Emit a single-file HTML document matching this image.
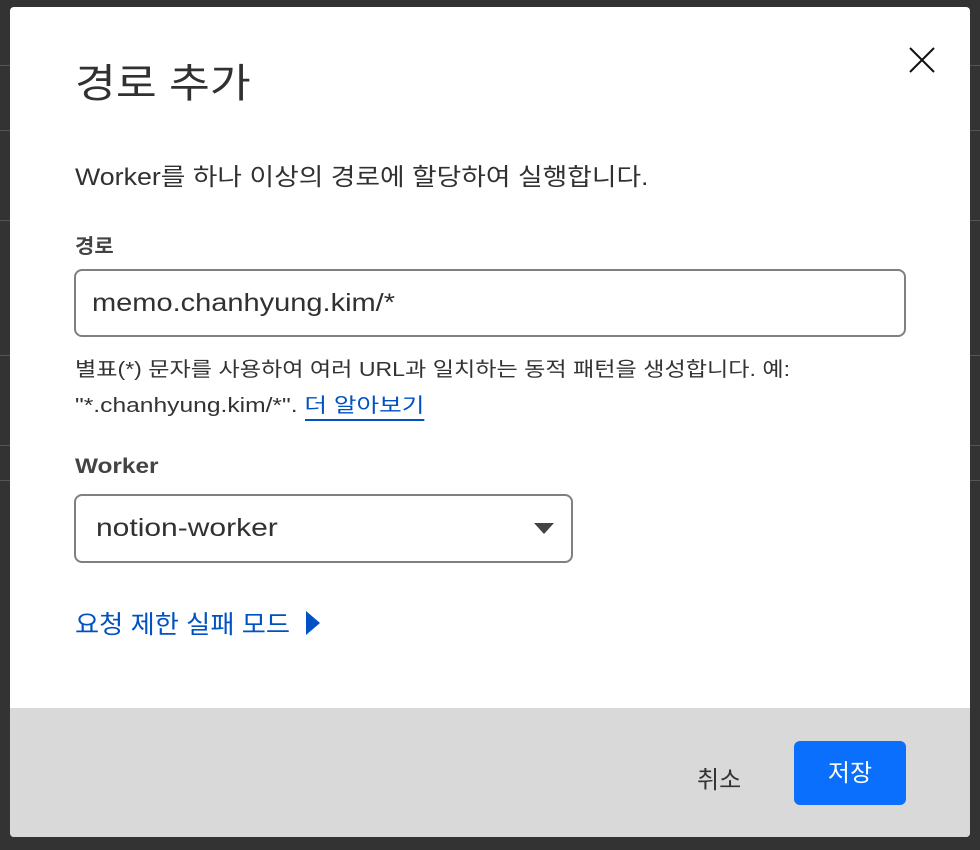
<!DOCTYPE html>
<html><head><meta charset="utf-8"><style>
*{margin:0;padding:0;box-sizing:border-box}
body{width:980px;height:850px;background:#333;position:relative;overflow:hidden;font-family:"Liberation Sans","Noto Sans CJK KR",sans-serif;color:#313131}
.bgl{position:absolute;left:0;width:980px;height:1px;background:#555}
.modal{position:absolute;left:10px;top:7px;width:960px;height:830px;background:#fff;border-radius:4px;overflow:hidden}
.abs{position:absolute;white-space:nowrap;transform-origin:0 50%}
h1{position:absolute;left:65px;top:44px;font-size:40px;font-weight:400;color:#313131;transform:scaleX(1.11);transform-origin:0 50%}
.inp{position:absolute;border:2px solid #808080;border-radius:8px}
.footer{position:absolute;left:0;top:701px;width:960px;height:129px;background:#d9d9d9}
.btn{position:absolute;left:784px;top:33px;width:112px;height:64px;background:#0a6ffc;border-radius:6px;color:#fff;font-size:24px;text-align:center;line-height:64px}
</style></head><body>
<div class="bgl" style="top:65px"></div><div class="bgl" style="top:130px"></div><div class="bgl" style="top:220px"></div><div class="bgl" style="top:355px"></div><div class="bgl" style="top:445px"></div><div class="bgl" style="top:480px"></div>
<div class="modal">
<h1>경로 추가</h1>
<svg class="abs" style="left:897px;top:38px" width="30" height="30" viewBox="0 0 30 30"><path d="M3 3L27 27M27 3L3 27" stroke="#111" stroke-width="2"/></svg>
<div class="abs" style="left:65px;top:150px;font-size:24px;transform:scaleX(1.115)">Worker를 하나 이상의 경로에 할당하여 실행합니다.</div>
<div class="abs" style="left:65px;top:223px;font-size:20px;font-weight:700;color:#444;transform:scaleX(1.05)">경로</div>
<div class="inp" style="left:64px;top:262px;width:832px;height:68px"></div>
<div class="abs" style="left:82px;top:282px;font-size:25px;transform:scaleX(1.16)">memo.chanhyung.kim/*</div>
<div class="abs" style="left:65px;top:346px;font-size:20px;color:#333;transform:scaleX(1.155)">별표(*) 문자를 사용하여 여러 URL과 일치하는 동적 패턴을 생성합니다. 예:</div>
<div class="abs" style="left:65px;top:382px;font-size:20px;color:#333;transform:scaleX(1.23)">"*.chanhyung.kim/*". <span style="color:#0051c3;border-bottom:2px solid #0051c3;padding-bottom:2px">더 알아보기</span></div>
<div class="abs" style="left:65px;top:448px;font-size:21px;font-weight:700;color:#444;transform:scaleX(1.16)">Worker</div>
<div class="inp" style="left:64px;top:487px;width:499px;height:69px"></div>
<div class="abs" style="left:86px;top:507px;font-size:25px;transform:scaleX(1.2)">notion-worker</div>
<svg class="abs" style="left:524px;top:516px" width="20" height="12"><path d="M0 0H20L10 11Z" fill="#444"/></svg>
<div class="abs" style="left:65px;top:598px;font-size:25px;color:#0051c3;transform:scaleX(1.05)">요청 제한 실패 모드</div>
<svg class="abs" style="left:295px;top:603px" width="16" height="26"><path d="M1 1L15 13L1 25Z" fill="#0051c3"/></svg>
<div class="footer">
<div class="abs" style="left:687px;top:52px;font-size:24px;color:#333">취소</div>
<div class="btn" style="line-height:66px">저장</div>
</div>
</div>
</body></html>
